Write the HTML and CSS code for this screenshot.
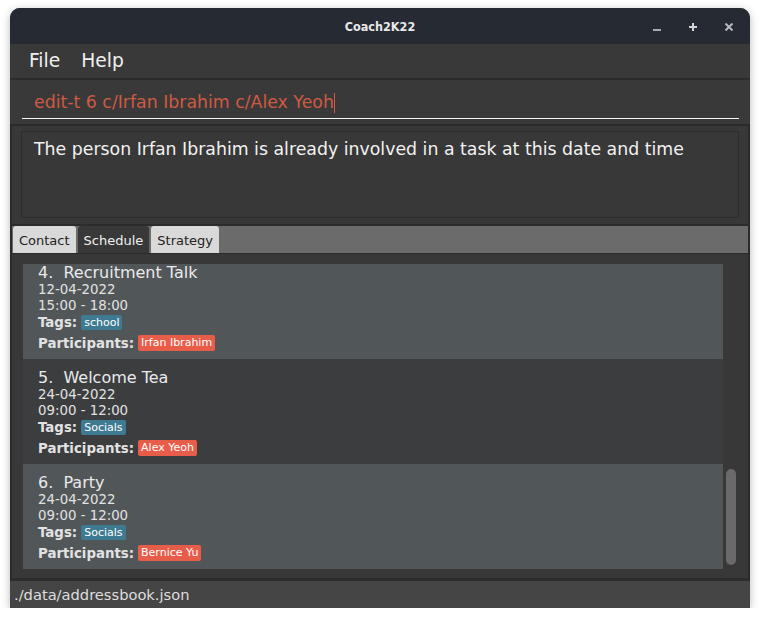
FILE: index.html
```html
<!DOCTYPE html>
<html>
<head>
<meta charset="utf-8">
<title>Coach2K22</title>
<link rel="stylesheet" href="styles.css">
</head>
<body>
<div class="window">
  <div class="titlebar">
    <div></div>
    <div class="title">Coach2K22</div>
    <div class="controls">
      <svg class="ctl" width="8" height="8" viewBox="0 0 8 8"><path d="M0 7H8" stroke="#a9abae" stroke-width="2"/></svg>
      <svg class="ctl" width="8" height="8" viewBox="0 0 8 8"><path d="M0 4H8M4 0V8" stroke="#d2d4d6" stroke-width="2"/></svg>
      <svg class="ctl" width="8" height="8" viewBox="0 0 8 8"><path d="M0.5 0.5L7.5 7.5M7.5 0.5L0.5 7.5" stroke="#b7b9bc" stroke-width="2"/></svg>
    </div>
  </div>
  <div class="menubar">
    <span class="menu-item">File</span>
    <span class="menu-item">Help</span>
  </div>
  <div class="command">
    <div class="command-input">edit-t 6 c/Irfan Ibrahim c/Alex Yeoh<span class="caret"></span></div>
  </div>
  <div class="main">
    <div class="result">
      <div class="result-box">The person Irfan Ibrahim is already involved in a task at this date and time</div>
    </div>
    <div class="tabbar">
      <div class="tab">Contact</div>
      <div class="tab selected">Schedule</div>
      <div class="tab">Strategy</div>
    </div>
    <div class="tab-content">
      <div class="list">
        <div class="card light first">
          <div class="card-title">4.&nbsp; Recruitment Talk</div>
          <div class="card-line">12-04-2022</div>
          <div class="card-line">15:00 - 18:00</div>
          <div class="chip-row"><span class="label">Tags:</span><span class="chip tag">school</span></div>
          <div class="chip-row part"><span class="label">Participants:</span><span class="chip person">Irfan Ibrahim</span></div>
        </div>
        <div class="card dark">
          <div class="card-title">5.&nbsp; Welcome Tea</div>
          <div class="card-line">24-04-2022</div>
          <div class="card-line">09:00 - 12:00</div>
          <div class="chip-row"><span class="label">Tags:</span><span class="chip tag">Socials</span></div>
          <div class="chip-row part"><span class="label">Participants:</span><span class="chip person">Alex Yeoh</span></div>
        </div>
        <div class="card light">
          <div class="card-title">6.&nbsp; Party</div>
          <div class="card-line">24-04-2022</div>
          <div class="card-line">09:00 - 12:00</div>
          <div class="chip-row"><span class="label">Tags:</span><span class="chip tag">Socials</span></div>
          <div class="chip-row part"><span class="label">Participants:</span><span class="chip person">Bernice Yu</span></div>
        </div>
      </div>
      <div class="scrollbar"><div class="thumb"></div></div>
    </div>
  </div>
  <div class="status">./data/addressbook.json</div>
</div>
</body>
</html>
```
FILE: styles.css
```css
* { box-sizing: border-box; }
html, body { margin: 0; padding: 0; background: #ffffff; }
body { padding: 8px 10px 0 10px; }

.window {
  width: 740px;
  height: 600px;
  border-radius: 10px 10px 0 0;
  overflow: hidden;
  background: #2b2b2b;
  display: flex;
  flex-direction: column;
  box-shadow: 0 2px 8px rgba(0,0,0,0.28);
  font-family: "DejaVu Sans", sans-serif;
}

.titlebar {
  height: 36px;
  flex: none;
  background: #252a33;
  display: grid;
  grid-template-columns: 1fr auto 1fr;
  align-items: center;
}
.title {
  font-family: "DejaVu Sans Condensed", "DejaVu Sans", sans-serif;
  font-stretch: condensed;
  font-weight: bold;
  font-size: 12.5px;
  color: #e8e8e8;
  padding-top: 1px;
}
.controls {
  display: flex;
  justify-content: flex-end;
  align-items: center;
  gap: 28px;
  padding-right: 17px;
  padding-top: 2px;
}
.ctl { display: block; }

.menubar {
  height: 34px;
  flex: none;
  background: #393939;
  display: flex;
  align-items: center;
  gap: 21px;
  padding-left: 19px;
  margin-bottom: 2px;
}
.menu-item {
  font-size: 18.67px;
  line-height: 34px;
  color: #f0f0f0;
}

.command {
  height: 44px;
  flex: none;
  background: #393939;
  padding: 11px 11px 0 12px;
  margin-bottom: 2px;
}
.command-input {
  font-size: 17.33px;
  line-height: 23px;
  color: #cf5a43;
  padding: 0 0 4px 12px;
  border-bottom: 1px solid #f4f4f4;
  white-space: pre;
}
.caret {
  display: inline-block;
  width: 1px;
  height: 20px;
  background: #cf5a43;
  vertical-align: -5px;
}

.main {
  flex: none;
  padding: 0 2px;
  display: flex;
  flex-direction: column;
}

.result {
  height: 98px;
  background: #383838;
  padding: 5px 9px 6px 9px;
  margin-bottom: 2px;
}
.result-box {
  height: 100%;
  border: 1px solid #2c2c2c;
  padding: 7px 12px 0 12px;
  font-size: 17.33px;
  line-height: 20px;
  color: #f2f2f2;
}

.tabbar {
  height: 27px;
  background: #6b6b6b;
  display: flex;
  gap: 2px;
  padding-left: 1px;
  margin-bottom: 1px;
}
.tab {
  height: 27px;
  padding: 2px 6px 0 6px;
  border-radius: 3px 3px 0 0;
  background: #d9d9d9;
  color: #222222;
  font-size: 13px;
  line-height: 25px;
}
.tab.selected {
  background: #383838;
  color: #f0f0f0;
}

.tab-content {
  height: 324px;
  background: #383838;
  padding: 10px 11px 9px 11px;
  display: flex;
}
.list {
  width: 700px;
  height: 305px;
  overflow: hidden;
  display: flex;
  flex-direction: column;
}
.card {
  height: 105px;
  flex: none;
  padding: 9px 0 0 15px;
  color: #e2e2e2;
}
.card.first { margin-top: -10px; }
.card.light { background: #515659; }
.card.dark { background: #3c3d3f; }
.card-title {
  font-size: 16px;
  line-height: 19px;
  color: #eaeaea;
  white-space: pre;
}
.card-line {
  font-size: 13.33px;
  line-height: 16px;
}
.chip-row {
  display: flex;
  align-items: center;
  height: 16px;
}
.chip-row.part {
  margin-top: 5px;
  height: 16px;
}
.label {
  font-weight: bold;
  font-size: 13.33px;
  line-height: 15px;
  margin-right: 4px;
}
.chip {
  font-size: 11px;
  line-height: 15px;
  padding: 0 3px;
  border-radius: 2px;
  color: #ffffff;
}
.chip-row.part .chip { line-height: 16px; }
.chip.tag { background: #3e7b92; }
.chip.person { background: #e85c4a; }

.scrollbar {
  width: 14px;
  height: 305px;
  display: flex;
  flex-direction: column;
  justify-content: flex-end;
  padding: 0 1px 4px 3px;
}
.thumb {
  width: 10px;
  height: 96px;
  border-radius: 5px;
  background: #6a6a6a;
}

.status {
  flex: none;
  margin-top: 3px;
  height: 27px;
  background: #454545;
  padding-left: 4px;
  font-size: 14.67px;
  line-height: 27px;
  color: #dedede;
}
```
